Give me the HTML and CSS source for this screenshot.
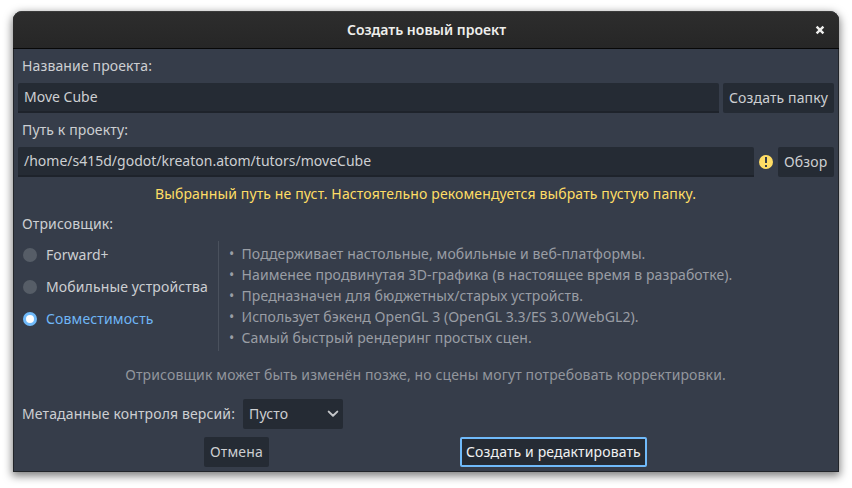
FILE: index.html
```html
<!DOCTYPE html>
<html lang="ru">
<head>
<meta charset="utf-8">
<title>Создать новый проект</title>
<link rel="stylesheet" href="styles.css">
</head>
<body>
<div class="window">
  <header class="titlebar">
    <h1 class="title">Создать новый проект</h1>
    <svg class="close" width="10" height="10" viewBox="0 0 10 10"><path d="M1.6 1.6 8.4 8.4M8.4 1.6 1.6 8.4"/></svg>
  </header>
  <main class="content">
    <div class="label">Название проекта:</div>
    <div class="row">
      <div class="input">Move Cube</div>
      <div class="button create-folder">Создать папку</div>
    </div>
    <div class="label">Путь к проекту:</div>
    <div class="row">
      <div class="input">/home/s415d/godot/kreaton.atom/tutors/moveCube</div>
      <svg class="warning" width="16" height="16" viewBox="0 0 16 16"><circle cx="8" cy="8" r="7" fill="#ffdd65"/><path d="M7 3h2v6H7zM7 11h2v2H7z" fill="#363d4a"/></svg>
      <div class="button browse">Обзор</div>
    </div>
    <div class="message">Выбранный путь не пуст. Настоятельно рекомендуется выбрать пустую папку.</div>
    <div class="label">Отрисовщик:</div>
    <div class="renderer">
      <div class="options">
        <div class="option latin"><i class="radio"></i><span>Forward+</span></div>
        <div class="option"><i class="radio"></i><span>Мобильные устройства</span></div>
        <div class="option selected"><i class="radio"></i><span>Совместимость</span></div>
      </div>
      <ul class="features">
        <li>Поддерживает настольные, мобильные и веб-платформы.</li>
        <li>Наименее продвинутая 3D-графика (в настоящее время в разработке).</li>
        <li>Предназначен для бюджетных/старых устройств.</li>
        <li class="mixed">Использует бэкенд OpenGL 3 (OpenGL 3.3/ES 3.0/WebGL2).</li>
        <li>Самый быстрый рендеринг простых сцен.</li>
      </ul>
    </div>
    <div class="note">Отрисовщик может быть изменён позже, но сцены могут потребовать корректировки.</div>
    <div class="row vcs">
      <div class="vcs-label">Метаданные контроля версий:</div>
      <div class="button select"><span>Пусто</span><svg width="12" height="8" viewBox="0 0 12 8"><path d="M1.7 1.6 6 5.7 10.3 1.6"/></svg></div>
    </div>
    <div class="actions">
      <div class="button cancel">Отмена</div>
      <div class="button primary">Создать и редактировать</div>
    </div>
  </main>
</div>
</body>
</html>
```
FILE: styles.css
```css
* { box-sizing: border-box; }
body {
  margin: 0;
  height: 488px;
  padding: 11px 13px 16px;
  background: #fff;
  overflow: hidden;
  font: 14px/20px "Noto Sans", sans-serif;
  letter-spacing: .13px;
  color: #cdcfd2;
}
.window {
  height: 461px;
  border: 1px solid #22252a;
  border-top: 0;
  border-radius: 9px 9px 0 0;
  background: #363d4a;
  box-shadow: 0 3px 9px 1px rgba(0, 0, 0, .5);
}
.titlebar {
  display: grid;
  grid-template-columns: 1fr auto 1fr;
  align-items: center;
  height: 38px;
  padding: 0 14px 0 15px;
  margin: 0 -1px;
  border-top: 1px solid #3b3b3b;
  border-bottom: 1px solid #070707;
  border-radius: 9px 9px 0 0;
  background: linear-gradient(#2d2d2d, #262626);
}
.title {
  grid-column: 2;
  margin: 0;
  font-size: 14px;
  font-weight: 600;
  letter-spacing: 0;
  color: #eeeeec;
}
.close { justify-self: end; fill: none; stroke: #eeeeec; stroke-width: 2.4; }
.content {
  display: flex;
  flex-direction: column;
  gap: 4px;
  padding: 4px;
}
.label, .message { height: 26px; line-height: 26px; white-space: nowrap; }
.label { padding-left: 4px; }
.message { text-align: center; color: #ffdd65; padding-right: 1px; }
.row { display: flex; align-items: center; gap: 4px; height: 30px; }
.input {
  flex: 1;
  height: 30px;
  padding: 4px 6px;
  background: #252b34;
  border-bottom: 2px solid #1e232b;
  border-radius: 2px 2px 0 0;
  letter-spacing: 0;
  white-space: nowrap;
}
.button {
  height: 30px;
  line-height: 30px;
  padding: 0 6px;
  border-radius: 2px;
  background: #252b34;
  white-space: nowrap;
}
.create-folder { width: 111px; }
.browse { width: 56px; }
.renderer { display: flex; height: 110px; }
.options { display: flex; flex-direction: column; gap: 4px; width: 201px; border-right: 1px solid #4a515d; }
.option { display: flex; align-items: center; height: 28px; padding-left: 5px; gap: 9px; white-space: nowrap; }
.latin { letter-spacing: 0; }
.radio { width: 14px; height: 14px; border-radius: 50%; background: #565d67; }
.selected { color: #6fb6f6; }
.selected .radio { background: #fff; border: 3px solid #70bafa; }
.features {
  list-style: none;
  margin: 0;
  padding: 2px 0 0 10px;
  line-height: 21px;
  letter-spacing: .1px;
  color: #9a9ea5;
}
.features li { display: flex; white-space: nowrap; }
.features li::before { content: "•"; width: 12.5px; }
.features .mixed { letter-spacing: .05px; }
.note { height: 40px; line-height: 40px; text-align: center; color: #92969d; padding-right: 1px; white-space: nowrap; }
.vcs { padding-left: 4px; }
.vcs-label { width: 217px; white-space: nowrap; }
.select { display: flex; align-items: center; justify-content: space-between; width: 100px; padding-right: 4px; }
.select svg { fill: none; stroke: #c4c6c9; stroke-width: 2; stroke-linecap: round; stroke-linejoin: round; }
.actions { display: flex; gap: 191px; padding: 4px 0 0 186px; }
.cancel { width: 65px; }
.primary { width: 187px; line-height: 26px; padding: 0 4px; border: 2px solid #70bafa; color: #f0f1f2; }
```
